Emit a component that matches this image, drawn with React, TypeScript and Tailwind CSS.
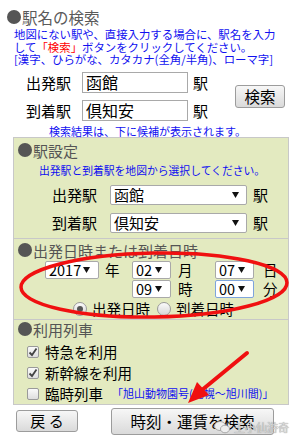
import React from "react";

const font = "font-['Noto_Sans_CJK_JP','Liberation_Sans',sans-serif]";

function Tri() {
  return (
    <svg width="7" height="6" viewBox="0 0 7 6" className="shrink-0">
      <path d="M0 0H7L3.5 6Z" fill="#111" />
    </svg>
  );
}

function Select({
  value,
  className,
  textClass,
}: {
  value: string;
  className: string;
  textClass: string;
}) {
  return (
    <div className={`flex items-center justify-between bg-white rounded-[2px] ${className}`}>
      <span className={textClass}>{value}</span>
      <Tri />
    </div>
  );
}

function Heading({ children }: { children: React.ReactNode }) {
  return (
    <div className="flex items-center gap-[1px] h-[15px] text-[15px] leading-[15px] text-[#555]">
      <span className="inline-block w-[14px] h-[14px] rounded-full bg-[#555]" />
      <span>{children}</span>
    </div>
  );
}

function Check({ on }: { on: boolean }) {
  return (
    <span className="flex items-center justify-center w-[12px] h-[12px] rounded-[2px] border border-[#9a9a9a] bg-gradient-to-b from-[#fafafa] to-[#dedede]">
      {on && (
        <svg width="10" height="10" viewBox="0 0 10 10">
          <path d="M1.5 5.5L4 8L8.5 1.5" fill="none" stroke="#444" strokeWidth="1.8" />
        </svg>
      )}
    </span>
  );
}

function Radio({ on }: { on: boolean }) {
  return (
    <span className="flex items-center justify-center w-[14px] h-[14px] rounded-full border border-[#9a9a9a] bg-gradient-to-b from-[#fbfbfb] to-[#d6d6d6]">
      {on && <span className="w-[6px] h-[6px] rounded-full bg-[#555]" />}
    </span>
  );
}

export default function App() {
  return (
    <div className={`relative w-[294px] h-[444px] overflow-hidden bg-white text-black ${font}`}>
      {/* 駅名の検索 */}
      <div className="ml-[7px] mt-[9px] flex items-center gap-[1px] h-[16px] text-[15.5px] leading-[16px] text-[#5a5a5a]">
        <span className="inline-block w-[14px] h-[14px] rounded-full bg-[#555]" />
        <span>駅名の検索</span>
      </div>
      <div className="ml-[14px] mt-[3px] text-[11.4px] leading-[12.5px] text-[#1010f0] whitespace-nowrap">
        <div>地図にない駅や、直接入力する場合に、駅名を入力</div>
        <div>
          して<span className="text-[#ff0000]">「検索」</span>ボタンをクリックしてください。
        </div>
        <div>[漢字、ひらがな、カタカナ(全角/半角)、ローマ字]</div>
      </div>

      <div className="mt-[6px] flex items-center">
        <div className="flex flex-col gap-[7px]">
          {[
            ["出発駅", "函館"],
            ["到着駅", "倶知安"],
          ].map(([l, v]) => (
            <div key={l} className="flex items-center h-[21px]">
              <span className="ml-[26px] w-[56px] text-[15px] leading-[21px]">{l}</span>
              <div className="w-[106px] h-[21px] border border-[#a9a9a9] bg-white pl-[3px] text-[16px] leading-[19px]">
                {v}
              </div>
              <span className="ml-[5px] text-[15px] leading-[21px]">駅</span>
            </div>
          ))}
        </div>
        <button className="ml-[27px] w-[50px] h-[23px] flex items-center justify-center rounded-[3px] border border-[#9c9c9c] bg-gradient-to-b from-[#f7f7f7] to-[#dadada] text-[15.5px] leading-[20px]">
          検索
        </button>
      </div>

      <div className="ml-[49px] mt-[4px] text-[11px] leading-[12px] text-[#1010f0] whitespace-nowrap">
        検索結果は、下に候補が表示されます。
      </div>

      {/* panel */}
      <div className="ml-[13px] w-[276px] border border-[#c8c8c8] bg-[#e3eac0]">
        {/* 駅設定 */}
        <div className="pl-[4px] pt-[5px] pb-[5px]">
          <Heading>駅設定</Heading>
          <div className="ml-[21px] mt-[6px] text-[10.8px] leading-[12px] text-[#1010f0] whitespace-nowrap">
            出発駅と到着駅を地図から選択してください。
          </div>
          <div className="mt-[9px] flex flex-col gap-[8px]">
            {[
              ["出発駅", "函館"],
              ["到着駅", "倶知安"],
            ].map(([l, v]) => (
              <div key={l} className="flex items-center h-[20px]">
                <span className="ml-[34px] w-[58px] text-[15px] leading-[20px]">{l}</span>
                <Select
                  value={v}
                  className="w-[137px] h-[20px] border border-[#a9a9a9] pl-[3px] pr-[7px]"
                  textClass="text-[15px] leading-[18px]"
                />
                <span className="ml-[6px] text-[15px] leading-[20px]">駅</span>
              </div>
            ))}
          </div>
        </div>

        {/* 出発日時または到着日時 */}
        <div className="border-t border-[#c8c8c8] pl-[4px] pt-[4px] pb-[3px]">
          <Heading>出発日時または到着日時</Heading>
          <div className="ml-[27px] mt-[3px] grid grid-cols-[54px_33px_39px_44px_39px_20px] gap-y-[1px] text-[14.5px] leading-[18px]">
            <Select value="2017" className="h-[18px] border border-[#a9a9a9] pl-[3px] pr-[8px]" textClass="text-[14.5px] leading-[16px]" />
            <span className="pl-[6px]">年</span>
            <Select value="02" className="h-[18px] border border-[#a9a9a9] pl-[3px] pr-[8px]" textClass="text-[14.5px] leading-[16px]" />
            <span className="pl-[7px]">月</span>
            <Select value="07" className="h-[18px] border border-[#a9a9a9] pl-[3px] pr-[8px]" textClass="text-[14.5px] leading-[16px]" />
            <span className="pl-[9px]">日</span>
            <span />
            <span />
            <Select value="09" className="h-[18px] border border-[#a9a9a9] pl-[3px] pr-[8px]" textClass="text-[14.5px] leading-[16px]" />
            <span className="pl-[7px]">時</span>
            <Select value="00" className="h-[18px] border border-[#7ea4dc] pl-[3px] pr-[8px]" textClass="text-[14.5px] leading-[16px]" />
            <span className="pl-[9px]">分</span>
          </div>
          <div className="ml-[55px] mt-[4px] flex items-center h-[14px] text-[14.5px] leading-[14px]">
            <Radio on />
            <span className="ml-[5px]">出発日時</span>
            <span className="ml-[7px]">
              <Radio on={false} />
            </span>
            <span className="ml-[5px]">到着日時</span>
          </div>
        </div>

        {/* 利用列車 */}
        <div className="border-t border-[#c8c8c8] pl-[4px] pt-[2px]">
          <Heading>利用列車</Heading>
          <div className="mt-[5px] ml-[9px] flex flex-col text-[14.5px]">
            <div className="flex items-center h-[21px] gap-[6px]">
              <Check on />
              <span>特急を利用</span>
            </div>
            <div className="flex items-center h-[21px] gap-[6px]">
              <Check on />
              <span>新幹線を利用</span>
            </div>
            <div className="flex items-center h-[20px] gap-[6px] whitespace-nowrap">
              <Check on={false} />
              <span>臨時列車</span>
              <span className="ml-[3px] text-[11px] text-[#1010f0]">「旭山動物園号(札幌～旭川間)」</span>
            </div>
          </div>
        </div>
      </div>

      {/* buttons */}
      <div className="mt-[3px] flex items-center">
        <button className="ml-[16px] w-[62px] h-[22px] flex items-center justify-center rounded-[3px] border border-[#9c9c9c] bg-gradient-to-b from-[#f7f7f7] to-[#dadada] text-[15px] leading-[20px]">
          戻 る
        </button>
        <button className="ml-[33px] w-[163px] h-[27px] flex items-center justify-center rounded-[3px] border border-[#9c9c9c] bg-gradient-to-b from-[#f7f7f7] to-[#dadada] text-[15.5px] leading-[22px]">
          時刻・運賃を検索
        </button>
      </div>

      {/* annotations */}
      <svg className="absolute inset-0 pointer-events-none" width="294" height="444" viewBox="0 0 294 444">
        <ellipse cx="154" cy="285" rx="133" ry="32" fill="none" stroke="#f01010" strokeWidth="3.5" transform="rotate(-1 154 285)" />
        <line x1="247" y1="353" x2="202" y2="390" stroke="#f01010" strokeWidth="4" strokeLinecap="round" />
        <polygon points="188,403 209,395 197,382" fill="#f01010" />
      </svg>

      {/* watermark */}
      <div className="absolute left-[214px] top-[420px] flex items-center gap-[4px] text-[11px] leading-[14px] text-[#d8d8d8] [text-shadow:0_0_1px_#777]">
        <svg width="16" height="13" viewBox="0 0 16 13">
          <ellipse cx="6" cy="5" rx="5.5" ry="4.5" fill="#eee" stroke="#999" strokeWidth="0.8" />
          <ellipse cx="11" cy="8" rx="4.5" ry="3.8" fill="#eee" stroke="#999" strokeWidth="0.8" />
        </svg>
        <span>王小仙游奇</span>
      </div>
    </div>
  );
}
